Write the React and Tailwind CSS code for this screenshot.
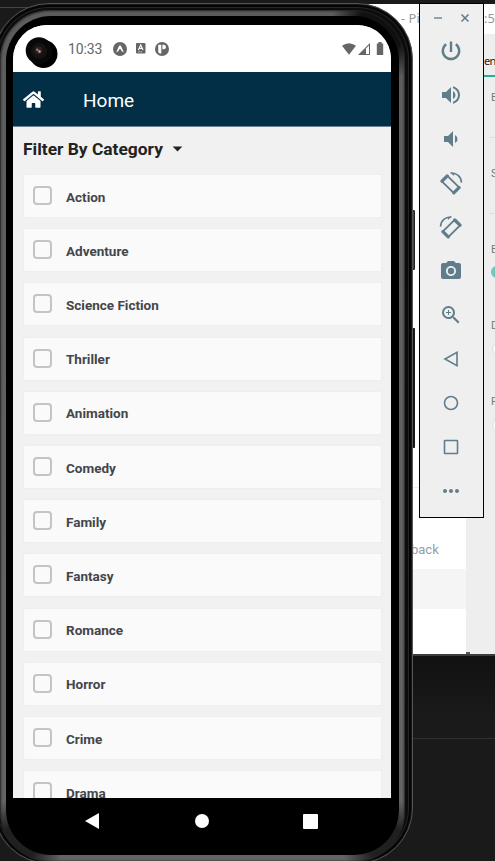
import React from "react";
import { FaHome } from "react-icons/fa";
import {
  MdVolumeUp, MdVolumeDown, MdPhotoCamera, MdZoomIn,
  MdMoreHoriz, MdArrowDropDown,
} from "react-icons/md";

const categories = [
  "Action", "Adventure", "Science Fiction", "Thriller", "Animation", "Comedy",
  "Family", "Fantasy", "Romance", "Horror", "Crime", "Drama",
];

function RotateIcon({ flip }) {
  return (
    <svg width="24" height="24" viewBox="0 0 24 24" fill="none" stroke="#607d8b" className={flip ? "-scale-x-100" : ""}>
      <path d="M8.4 4.9 L20.1 16.4 L14.6 21.9 L2.9 10.4 Z" strokeWidth="1.9" strokeLinejoin="round" />
      <path d="M8.2 5 L3 10.2 M20.1 16.6 L14.8 21.9" strokeWidth="3.2" strokeLinecap="round" />
      <path d="M11.6 2 C17.5 1.4 22.2 5.6 22.5 11.6" strokeWidth="1.6" />
      <path d="M11.4 1.6 L16 2.6 L14.6 4.8 Z" fill="#607d8b" stroke="none" />
    </svg>
  );
}

function Toolbar() {
  return (
    <div className="absolute left-[419px] top-[3px] flex h-[515px] w-[65px] flex-col items-center border border-black bg-[#efefef] text-[#607d8b]">
      <div className="flex h-[25px] w-full items-center gap-[18px] pl-[14px] pt-[3px]">
        <span className="h-[1.5px] w-2 bg-[#90a4ae]" />
        <svg width="10" height="10" viewBox="0 0 10 10" fill="none" stroke="currentColor" strokeWidth="1.6"><path d="M1.5 1.5 L8.5 8.5 M8.5 1.5 L1.5 8.5" /></svg>
      </div>
      <div className="mr-[2px] flex flex-col items-center [&>div]:flex [&>div]:h-11 [&>div]:w-11 [&>div]:items-center [&>div]:justify-center">
        <div>
          <svg width="24" height="24" viewBox="0 0 24 24" fill="none" stroke="currentColor" strokeWidth="2.4"><path d="M12 2.5 V13 M7.2 5.2 A8.2 8.2 0 1 0 16.8 5.2" /></svg>
        </div>
        <div><MdVolumeUp size={24} /></div>
        <div><MdVolumeDown size={24} /></div>
        <div><RotateIcon /></div>
        <div><RotateIcon flip /></div>
        <div><MdPhotoCamera size={24} /></div>
        <div><MdZoomIn size={24} /></div>
        <div>
          <svg width="24" height="24" viewBox="0 0 24 24" fill="none" stroke="currentColor" strokeWidth="1.6"><path d="M6 12 L18 5.4 V18.6 Z" /></svg>
        </div>
        <div>
          <svg width="24" height="24" viewBox="0 0 24 24" fill="none" stroke="currentColor" strokeWidth="1.6"><circle cx="12" cy="12" r="6.5" /></svg>
        </div>
        <div>
          <svg width="24" height="24" viewBox="0 0 24 24" fill="none" stroke="currentColor" strokeWidth="1.6"><rect x="5.5" y="5.5" width="13" height="13" rx="0.5" /></svg>
        </div>
        <div><MdMoreHoriz size={24} /></div>
      </div>
    </div>
  );
}

function BackWindow() {
  return (
    <div className="absolute left-[360px] top-[4px] h-[652px] w-[135px] overflow-hidden border-b-2 border-[#3c3c3c] bg-white font-['Noto_Sans',sans-serif] text-[#777]">
      <span className="absolute left-[41px] top-[6px] text-[13px] leading-4 text-[#999]">- Pi</span>
      <span className="absolute left-[124px] top-[6px] text-[13px] leading-4 text-[#999]">:5</span>
      <div className="absolute left-0 top-[483px] h-px w-[106px] bg-[#eee]" />
      <span className="absolute left-[51px] top-[538px] font-[Roboto,sans-serif] text-[13px] leading-4 text-[#90a0ad]">back</span>
      <div className="absolute left-0 top-[565px] h-10 w-[106px] bg-[#f5f5f5]" />
      <div className="absolute left-[106px] top-[30px] h-[620px] w-[29px] bg-[#eee]">
        <span className="absolute left-[18px] top-[19px] text-[11px] leading-4 tracking-[-0.6px] text-[#222]">en</span>
        <div className="absolute left-[18px] top-[41px] h-[2px] w-3 bg-[#26b09c]" />
        <div className="absolute left-[25px] top-[56px] font-[Roboto,sans-serif] text-[11px] leading-4">E</div>
        <div className="absolute left-[24px] top-[103px] h-px w-2 bg-[#ddd]" />
        <div className="absolute left-[25px] top-[132px] font-[Roboto,sans-serif] text-[11px] leading-4">S</div>
        <div className="absolute left-[24px] top-[179px] h-px w-2 bg-[#ddd]" />
        <div className="absolute left-[25px] top-[208px] font-[Roboto,sans-serif] text-[11px] leading-4">E</div>
        <div className="absolute left-[25px] top-[232px] size-3 rounded-full bg-[#74c5b9]" />
        <div className="absolute left-[25px] top-[284px] font-[Roboto,sans-serif] text-[11px] leading-4">D</div>
        <div className="absolute left-[26px] top-[308px] size-3.5 rounded-full border border-[#ddd] bg-[#fafafa]" />
        <div className="absolute left-[25px] top-[360px] font-[Roboto,sans-serif] text-[11px] leading-4">F</div>
        <div className="absolute left-[26px] top-[384px] size-3.5 rounded-full border border-[#ddd] bg-[#fafafa]" />
        <div className="absolute left-0 top-[618px] h-[2px] w-1 bg-[#555]" />
      </div>
    </div>
  );
}

function StatusBar() {
  return (
    <div className="flex h-[47px] shrink-0 items-center bg-white pl-[12px] pr-[7px] text-[#666]">
      <svg width="34" height="36" viewBox="0 0 34 36" className="mt-[9px] shrink-0">
        <circle cx="18.5" cy="19" r="14" fill="#000" />
        <circle cx="14" cy="15.5" r="13.3" fill="#080808" />
        <circle cx="14" cy="16" r="8" fill="#141212" />
        <circle cx="13.5" cy="15.5" r="4" fill="#2c2020" />
        <circle cx="12.3" cy="14.7" r="1.2" fill="#a67970" />
        <circle cx="14.5" cy="16.5" r="1.2" fill="#c5aaa5" />
      </svg>
      <span className="ml-[9px] mt-px w-[35px] whitespace-nowrap text-[14px] leading-4 tracking-[-0.1px]">10:33</span>
      <svg width="14" height="14" viewBox="0 0 14 14" className="ml-[10px]"><circle cx="7" cy="7" r="7" fill="#666" /><path d="M3.2 10.2 L6.2 3.6 H7.8 L10.8 10.2 L9 9.6 L7 6.4 L5 9.6 Z" fill="#fff" /></svg>
      <svg width="10" height="11" viewBox="0 0 10 11" className="ml-[9px]"><rect width="9.5" height="10.5" rx="1" fill="#666" /><path d="M2.4 7 L4.7 1.8 L7 7 M3.2 5.4 H6.2" stroke="#fff" strokeWidth="1.1" fill="none" /><path d="M2 8.8 H6" stroke="#ccc" strokeWidth=".7" /></svg>
      <svg width="14" height="14" viewBox="0 0 14 14" className="ml-[9px]"><circle cx="7" cy="7" r="7" fill="#666" /><path d="M3.2 2.8 H6.3 V11.6 H4.8 Q3.2 11 3.2 9.5 Z M7.4 2.8 H9 Q11 3 11 5 Q11 7 9 7.3 H7.4 Z" fill="#fff" /></svg>
      <div className="ml-auto flex items-center">
        <svg width="14" height="12" viewBox="0 0 14 12"><path d="M0 2.8 Q7 -2.4 14 2.8 L7 11.8 Z" fill="#666" /></svg>
        <svg width="12" height="12" viewBox="0 0 12 12" className="ml-[2px]"><path d="M0 12 L12 0 V12 Z" fill="#666" /><path d="M8 5.5 L11 2.5 V11 H8 Z" fill="#fff" /></svg>
        <svg width="8" height="13" viewBox="0 0 8 13" className="ml-[6px]"><path d="M.8 1.5 H2.4 V0 H5.6 V1.5 H7.2 V13 H.8 Z" fill="#666" /></svg>
      </div>
    </div>
  );
}

function Phone() {
  return (
    <div className="absolute left-[-7px] top-[3px] h-[861px] w-[420px] rounded-[56px] border border-[#555] bg-[#0c0c0c] pl-[6px] pr-[7px] pt-[6px] shadow-[inset_0_0_0_1px_#171717,inset_0_0_0_3px_#050505,inset_0_0_0_4px_#252525]">
      <div className="h-[852px] w-[405px] rounded-[50px] bg-[radial-gradient(circle_at_382px_18px,#101010_0,#101010_24px,transparent_52px),radial-gradient(circle_at_20px_832px,#202020_0,#202020_18px,transparent_44px),radial-gradient(circle_at_385px_832px,#202020_0,#202020_18px,transparent_44px),linear-gradient(#5c5c5c,#646464)] p-[6px] shadow-[inset_0_0_2px_1px_#222]">
        <div className="h-[839px] w-[393px] rounded-[45px] bg-black pl-[7px] pr-[8px] pt-[9px]">
          <div className="flex h-[773px] w-[378px] flex-col overflow-hidden rounded-t-[34px] bg-[#f1f1f1]">
            <StatusBar />
            <header className="flex h-[55px] shrink-0 items-center border-b border-[#6d8290] bg-[#022f45] pl-[10px] text-white">
              <FaHome size={21} />
              <h1 className="ml-[39px] mt-[3px] text-[19px] font-normal leading-6">Home</h1>
            </header>
            <div className="flex h-[47px] shrink-0 items-center pl-[10px] text-[#222]">
              <h2 className="-mt-[3px] whitespace-nowrap text-[17.4px] font-bold leading-6">Filter By Category</h2>
              <MdArrowDropDown size={23} className="ml-[3px] -mt-[5px]" />
            </div>
            <div className="flex flex-col gap-[10.2px] pl-[10px] pr-[9px]">
              {categories.map((c) => (
                <div key={c} className="flex h-11 shrink-0 items-center rounded-[2px] border border-[#eeeeee] bg-[#fafafa] pl-[9px]">
                  <span className="-mt-[1px] size-[19px] rounded-[4px] border-2 border-[#c4c4c4]" />
                  <span className="ml-[14px] mt-[1.4px] text-[13.5px] font-bold leading-5 text-[#43464a]">{c}</span>
                </div>
              ))}
            </div>
          </div>
          <nav className="flex h-[46px] items-center pl-[72px]">
            <svg width="14" height="16" viewBox="0 0 14 16"><path d="M14 0 V16 L0 8 Z" fill="#fff" /></svg>
            <span className="ml-[96px] size-[14px] rounded-full bg-white" />
            <span className="ml-[94px] size-[15px] rounded-[1px] bg-white" />
          </nav>
        </div>
      </div>
    </div>
  );
}

export default function App() {
  return (
    <main className="relative h-[861px] w-[495px] overflow-hidden bg-[#1a1a1a] font-[Roboto,sans-serif]">
      <div className="absolute left-0 top-[7px] h-px w-[50px] bg-[#444]" />
      <div className="absolute left-[400px] top-[656px] h-[60px] w-[95px] bg-linear-to-b from-[#111] to-[#1a1a1a]" />
      <div className="absolute left-[400px] top-[738px] h-px w-[95px] bg-[#303030]" />
      <BackWindow />
      <div className="absolute left-[411px] top-[210px] h-[60px] w-1 rounded-r-[1px] border border-[#222] bg-[#444]" />
      <div className="absolute left-[411px] top-[328px] h-[120px] w-1 rounded-r-[1px] bg-[#151515]" />
      <Phone />
      <Toolbar />
    </main>
  );
}
